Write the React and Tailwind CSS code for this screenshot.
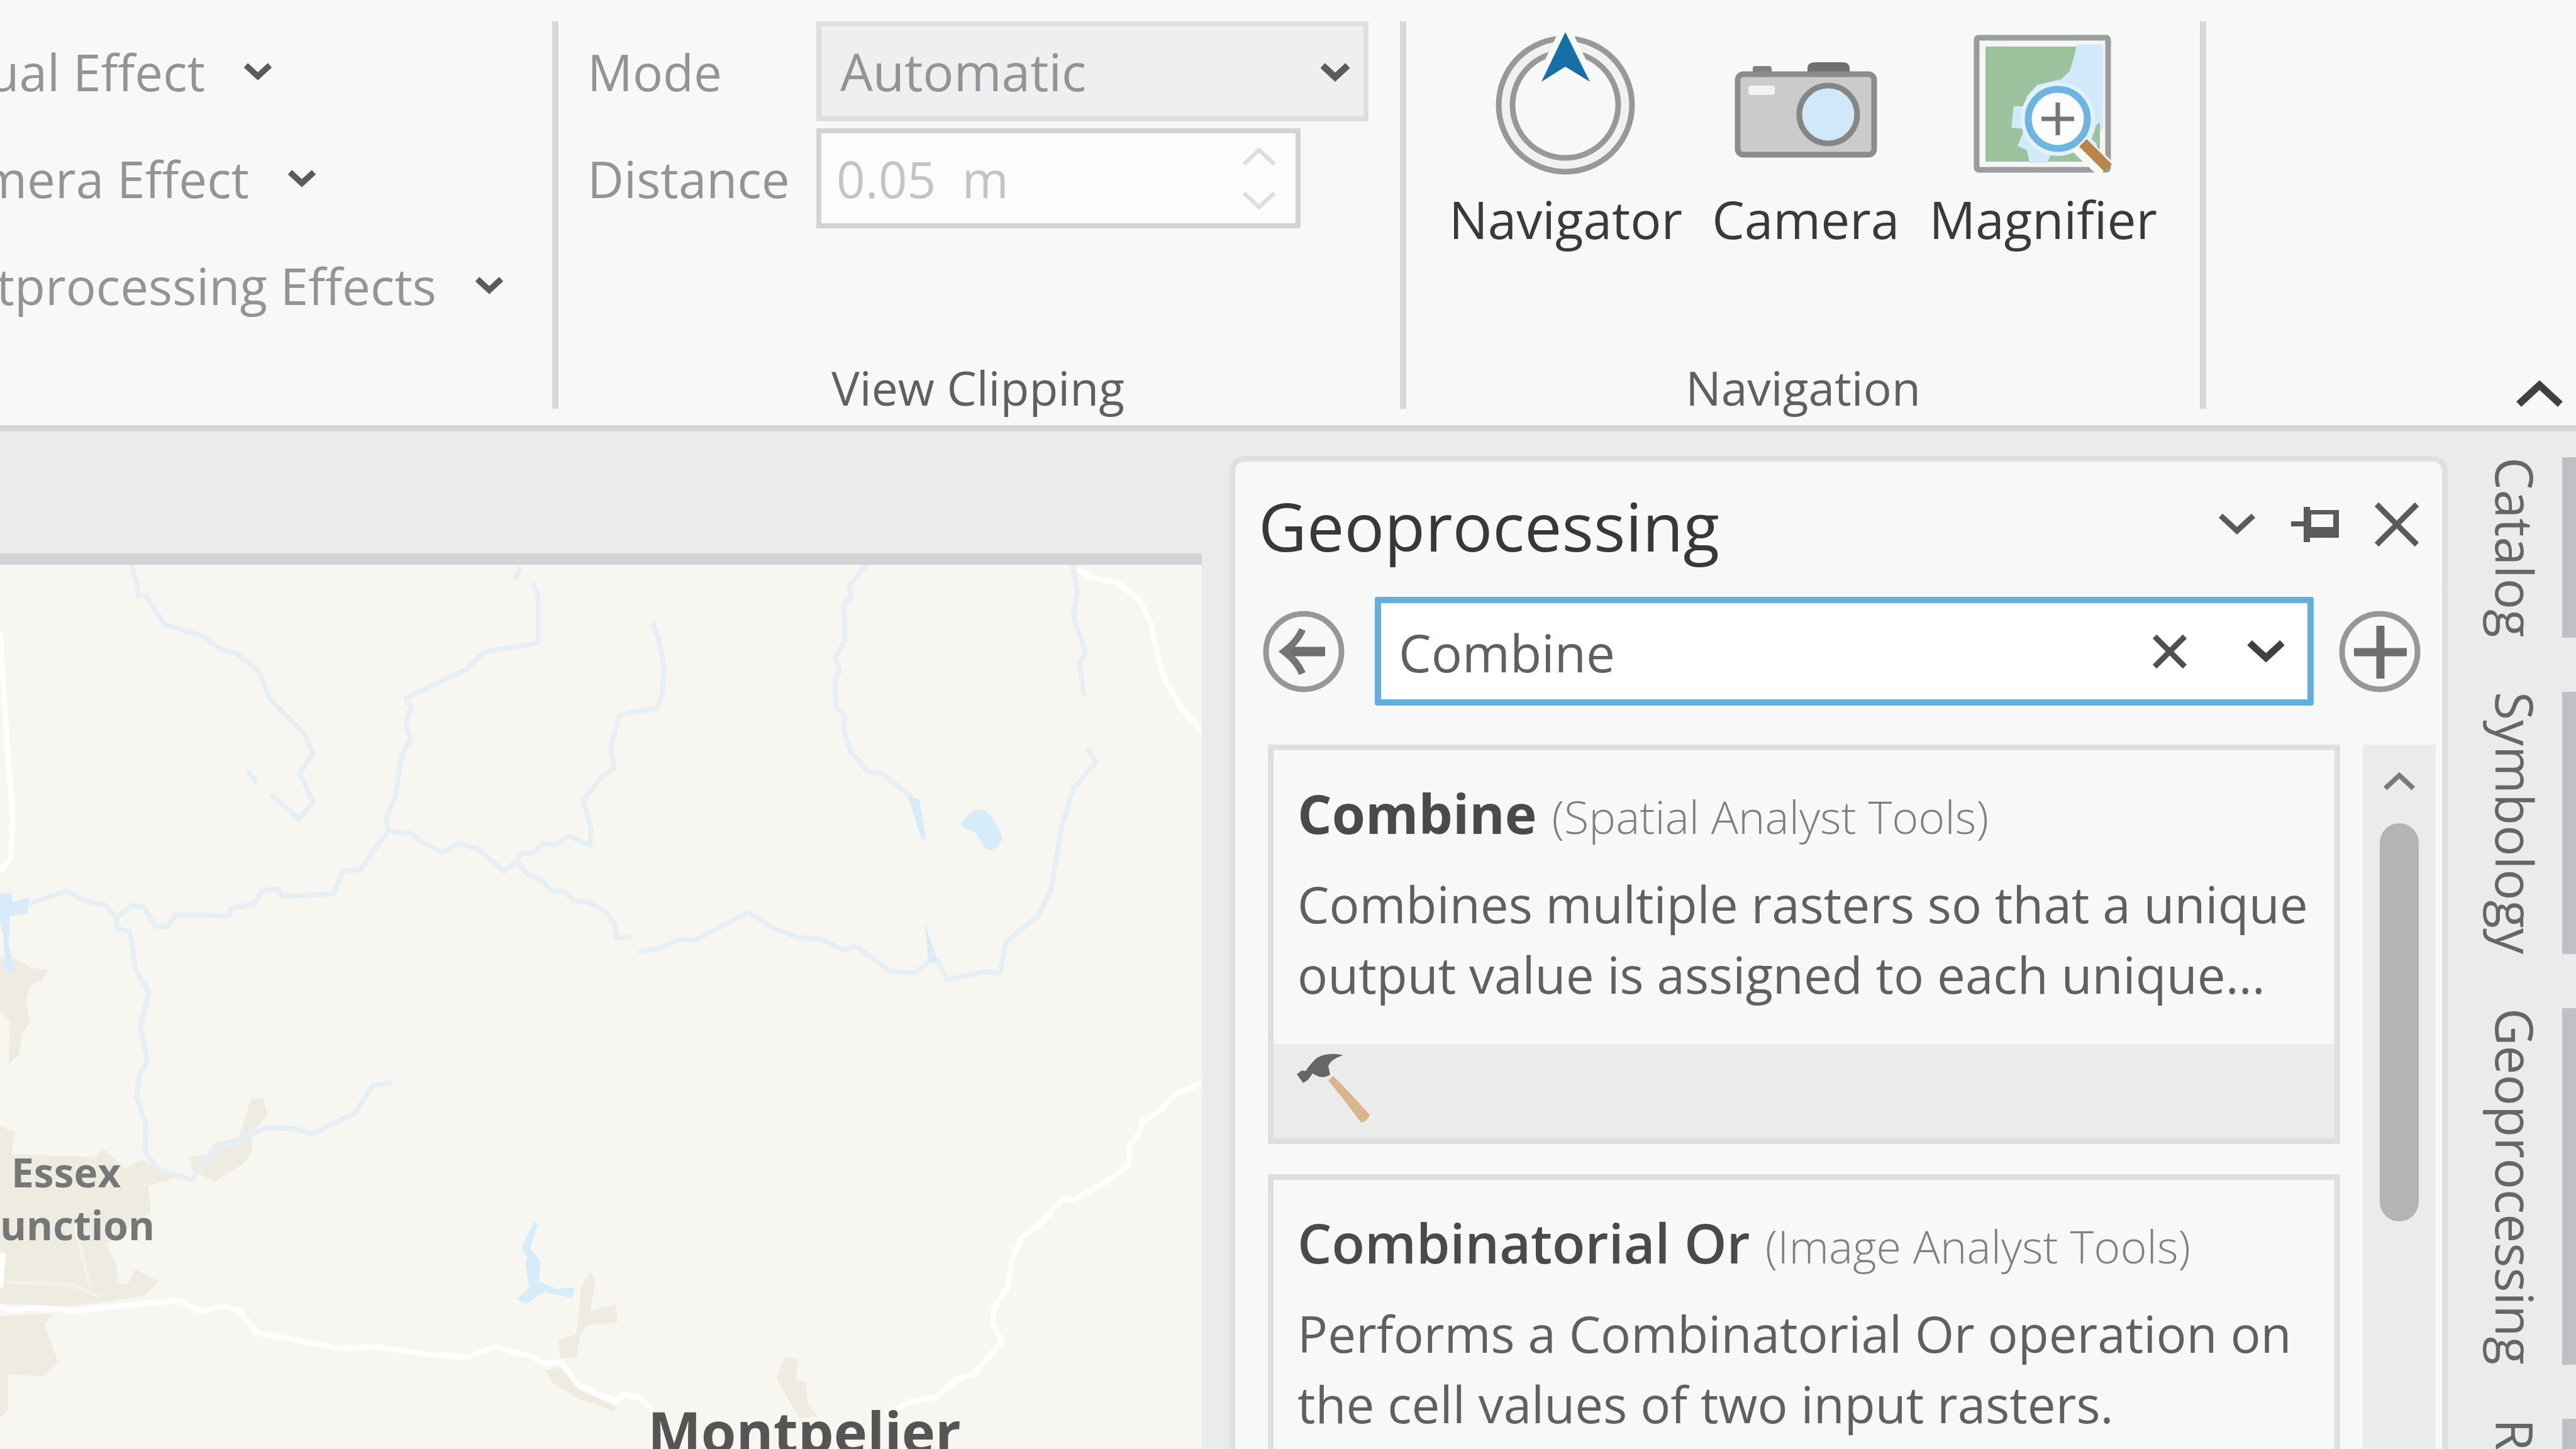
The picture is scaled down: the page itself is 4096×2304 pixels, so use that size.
import React from "react";

function Chevron({ up = false, className = "", stroke = 10 }) {
  return (
    <svg viewBox="0 0 60 36" fill="none" stroke="currentColor" strokeWidth={stroke} className={className} aria-hidden="true">
      <path d={up ? "M4 32 L30 8 L56 32" : "M4 4 L30 28 L56 4"} />
    </svg>
  );
}

function Cross({ className = "", stroke = 10 }) {
  return (
    <svg viewBox="0 0 72 72" fill="none" stroke="currentColor" strokeWidth={stroke} className={className} aria-hidden="true">
      <path d="M4 4 L68 68 M68 4 L4 68" />
    </svg>
  );
}

function PinIcon() {
  return (
    <svg viewBox="0 0 76 56" className="h-[56px] w-[76px]" aria-hidden="true">
      <g fill="#5a5a5a">
        <rect x="0" y="23" width="24" height="8" />
        <rect x="20" y="0" width="10" height="56" />
        <path d="M26 5 H76 V49 H26 Z M32 12 V32 H67 V12 Z" fillRule="evenodd" />
      </g>
    </svg>
  );
}

function NavigatorIcon() {
  return (
    <svg viewBox="0 0 223 230" className="h-[230px] w-[223px]" aria-hidden="true">
      <circle cx="111" cy="117" r="95" fill="none" stroke="#f1f1f1" strokeWidth="20" />
      <circle cx="111" cy="117" r="106" fill="none" stroke="#989898" strokeWidth="9" />
      <circle cx="111" cy="117" r="84" fill="none" stroke="#989898" strokeWidth="9" />
      <path d="M111 1 L150 80 L111 56 L73 80 Z" fill="#1670a8" stroke="#f7f9f8" strokeWidth="20" paintOrder="stroke" />
    </svg>
  );
}

function CameraIcon() {
  return (
    <svg viewBox="0 -47 227 230" className="h-[230px] w-[227px]" aria-hidden="true">
      <rect x="29" y="8" width="30" height="16" rx="4" fill="#808080" />
      <path d="M116 22 V12 Q116 2 128 2 H172 Q183 2 183 12 V22 Z" fill="#6f6f6f" />
      <rect x="5" y="21" width="217" height="128" rx="9" fill="#cbcbcb" stroke="#8c8c8c" strokeWidth="9" />
      <rect x="22" y="39" width="42" height="15" rx="4" fill="#f2f2f2" />
      <circle cx="149" cy="85" r="46" fill="#d0e8f8" stroke="#868686" strokeWidth="9" />
    </svg>
  );
}

function MagnifierIcon() {
  return (
    <svg viewBox="0 -5 222 230" className="h-[230px] w-[222px]" aria-hidden="true">
      <rect x="5" y="5" width="209" height="210" rx="3" fill="#f4f6f5" stroke="#9b9d9c" strokeWidth="9" />
      <rect x="19" y="19" width="182" height="183" fill="#9bc29c" />
      <path d="M164 16 H206 V148 L196 160 L196 190 L124 190 L118 204 H89 L85 184 L70 177 L81 150 L60 148 L64 114 H81 L85 98 L101 80 L139 71 L153 58 L160 35 Z" fill="#d1e9f8" />
      <path d="M124 190 L118 202 H190 L166 174 Z M196 143 L201 140 V178 L188 166 Z" fill="#9bc29c" />
      <circle cx="134" cy="134" r="59" fill="#e4f1f9" />
      <circle cx="134" cy="134" r="47" fill="#fdfdfd" stroke="#6cb4e2" strokeWidth="11" />
      <path d="M108 134 H160 M134 108 V160" stroke="#757575" strokeWidth="7" />
      <path d="M168 174 L210 214" stroke="#f7f9f8" strokeWidth="32" />
      <path d="M174 172 L214 212" stroke="#ba8548" strokeWidth="17" strokeLinecap="butt" />
    </svg>
  );
}

function HammerIcon() {
  return (
    <svg viewBox="0 0 116 110" className="h-[110px] w-[116px]" aria-hidden="true">
      <path d="M50 43 L58 36 Q90 68 116 98 Q112 108 102 110 Q76 74 50 43 Z" fill="#d9b58a" />
      <path d="M0 33 L8 27 L14 28 Q22 16 32 7 Q50 -3 74 3 Q54 9 50 20 L53 34 Q42 40 33 36 L25 32 Q22 36 18 42 L10 47 Z" fill="#666666" />
    </svg>
  );
}

function BackIcon() {
  return (
    <svg viewBox="0 0 130 130" fill="none" className="h-[130px] w-[130px]" aria-hidden="true">
      <circle cx="65" cy="65" r="60" stroke="#979797" strokeWidth="9" />
      <path d="M38 65 H99" stroke="#6e6e6e" strokeWidth="15" />
      <path d="M63 30 Q54 50 34 65 Q54 80 63 100" stroke="#757575" strokeWidth="11" />
    </svg>
  );
}

function AddIcon() {
  return (
    <svg viewBox="0 0 130 130" fill="none" className="h-[130px] w-[130px]" aria-hidden="true">
      <circle cx="65" cy="65" r="60" stroke="#979797" strokeWidth="9" />
      <path d="M24 66 H108 M66 24 V108" stroke="#6e6e6e" strokeWidth="13" />
    </svg>
  );
}

function Separator() {
  return <div className="my-[34px] mb-[26px] w-[10px] shrink-0 bg-[#d6d8d7]" />;
}

function EffectButton({ label, widthClass }) {
  return (
    <button type="button" className="flex h-[159px] items-center gap-[62px]">
      <span className={"flex justify-end whitespace-nowrap leading-[112px] " + widthClass}>{label}</span>
      <Chevron className="h-[30px] w-[44px] shrink-0 text-[#5c5c5c]" stroke={13} />
    </button>
  );
}

function NavButton({ icon, label }) {
  return (
    <button type="button" className="flex flex-col items-center gap-[20px] text-[#3a3a3a]">
      {icon}
      <span className="text-[82px] leading-[96px]">{label}</span>
    </button>
  );
}

function Ribbon() {
  return (
    <header className="flex shrink-0 border-b-[10px] border-[#d3d6d8] bg-[#f7f9f8] text-[80px] text-[#929496]">
      <div className="flex h-[676px] w-[878px] shrink-0 flex-col items-start gap-[11px] pt-[34px]">
        <EffectButton label="ual Effect" widthClass="w-[326px]" />
        <EffectButton label="mera Effect" widthClass="w-[396px]" />
        <EffectButton label="tprocessing Effects" widthClass="w-[694px]" />
      </div>
      <Separator />
      <section aria-label="View Clipping" className="flex flex-col justify-between pt-[34px] pr-[50px] pb-[26px] pl-[46px]">
        <div className="grid grid-cols-[364px_878px] items-center gap-y-[11px]">
          <label htmlFor="mode">Mode</label>
          <div className="relative">
            <select id="mode" disabled className="h-[159px] w-full appearance-none border-8 border-[#dcdee0] bg-[#eeeff1] pl-[30px] text-[82px] text-[#929496] opacity-100">
              <option>Automatic</option>
            </select>
            <Chevron className="pointer-events-none absolute top-[66px] right-[30px] h-[30px] w-[46px] text-[#5c5c5c]" stroke={14} />
          </div>
          <label htmlFor="distance">Distance</label>
          <div className="flex h-[159px] w-[770px] items-center border-8 border-[#d2d4d3] bg-[#fcfcfc] pr-[30px]">
            <input id="distance" disabled defaultValue="0.05  m" className="h-full min-w-0 flex-1 bg-transparent pl-[24px] text-[#c2c4c6]" />
            <div className="flex flex-col gap-[38px]">
              <button type="button" disabled aria-label="Increase"><Chevron up className="h-[34px] w-[56px] text-[#dcdfde]" stroke={7} /></button>
              <button type="button" disabled aria-label="Decrease"><Chevron className="h-[34px] w-[56px] text-[#dcdfde]" stroke={7} /></button>
            </div>
          </div>
        </div>
        <h2 className="text-center text-[75px] leading-[68px] text-[#606060]">View Clipping</h2>
      </section>
      <Separator />
      <section aria-label="Navigation" className="flex flex-col justify-between px-[68px] pt-[50px] pb-[26px]">
        <div className="flex gap-[47px]">
          <NavButton icon={<NavigatorIcon />} label="Navigator" />
          <NavButton icon={<CameraIcon />} label="Camera" />
          <NavButton icon={<MagnifierIcon />} label="Magnifier" />
        </div>
        <h2 className="text-center text-[75px] leading-[68px] text-[#606060]">Navigation</h2>
      </section>
      <Separator />
      <div className="flex flex-1 items-end justify-end pr-[20px] pb-[28px]">
        <button type="button" aria-label="Collapse ribbon"><Chevron up className="h-[46px] w-[76px] text-[#404040]" stroke={9} /></button>
      </div>
    </header>
  );
}

const rivers = [
  "M335 45 L350 75 L352 100 L372 98 L420 148 L520 168 L555 188 L605 198 L660 228 L688 275 L775 335 L797 370 L765 403 L798 455 L762 483 L690 440",
  "M630 400 L655 420",
  "M1328 48 L1314 70",
  "M1360 75 L1372 100 L1372 180 L1235 195 L1190 225 L1035 275 L1048 292 L1035 320 L1047 345 L1025 372 L1008 445 L985 480 L992 503",
  "M70 630 L170 607 L215 623 L265 630 L298 652 L335 632 L365 634 L398 668 L425 668 L450 648 L585 650 L590 636 L650 630 L668 606 L708 603 L722 616 L850 612 L875 573 L920 570 L950 540 L990 503 L1050 508 L1080 525 L1130 540 L1170 525 L1220 535 L1285 573 L1318 555 L1345 578 L1385 590 L1405 607 L1440 608 L1465 625 L1500 626 L1540 640 L1568 665 L1572 688 L1610 685",
  "M1318 555 L1330 542 L1360 542 L1385 525 L1420 527 L1450 512 L1505 528 L1508 505 L1488 450 L1535 410 L1566 395 L1558 360 L1578 305 L1625 297 L1678 292 L1690 262 L1693 215 L1678 170 L1665 145",
  "M298 652 L298 672 L330 676 L348 745 L380 782 L358 840 L375 900 L355 925 L348 960 L372 1010 L370 1055 L405 1088 L490 1104 L545 1052 L600 1040 L675 1015 L750 1016 L795 1025 L905 990 L950 942 L1000 937",
  "M1628 712 L1680 706 L1735 690 L1772 692 L1910 643 L1970 670 L2035 687 L2095 690 L2150 708 L2185 703 L2270 745 L2335 748 L2372 725 L2392 727 L2415 760 L2505 746 L2550 748 L2565 695 L2650 648 L2680 605 L2710 490 L2738 430 L2795 385 L2772 360",
  "M2210 45 L2165 82 L2170 100 L2152 115 L2155 175 L2130 205 L2142 228 L2130 240 L2132 290 L2155 305 L2152 330 L2170 368 L2215 402 L2250 405 L2325 445",
  "M2735 45 L2748 90 L2738 135 L2768 195 L2752 215 L2765 270",
];

const roads = [
  "M0 160 L16 330 L32 480 L28 548 L0 575",
  "M0 1322 L35 1330 L80 1324 L190 1330 L360 1318 L455 1312 L515 1332 L570 1321 L610 1330 L655 1368 L860 1394 L970 1393 L1110 1407 L1195 1409 L1265 1392 L1350 1408 L1390 1420 L1430 1418 L1475 1458 L1568 1486 L1590 1475 L1630 1478 L1665 1503",
  "M2750 52 L2780 67 L2850 76 L2905 105 L2935 145 L2962 230 L3010 290 L3065 332",
  "M3065 938 L3000 955 L2960 985 L2915 1003 L2905 1025 L2880 1045 L2878 1080 L2820 1108 L2740 1138 L2710 1138 L2650 1182 L2605 1203 L2582 1240 L2570 1290 L2535 1325 L2532 1350 L2555 1383 L2485 1438 L2440 1448 L2390 1478 L2320 1487 L2260 1510",
  "M0 1290 L8 1230",
];

const towns = [
  "M0 1012 L38 1022 L30 1060 L240 1065 L262 1050 L320 1085 L360 1070 L410 1085 L450 1100 L378 1115 L385 1160 L270 1215 L298 1250 L300 1280 L325 1285 L345 1258 L405 1280 L365 1305 L180 1322 L0 1318 Z",
  "M0 1338 L140 1335 L112 1352 L148 1418 L115 1442 L20 1440 L22 1500 L0 1515 Z",
  "M0 720 L45 725 L80 740 L125 742 L105 762 L78 768 L66 795 L78 832 L58 850 L48 890 L22 904 L25 830 L0 815 Z",
  "M485 1065 L530 1060 L545 1042 L610 1030 L640 965 L672 965 L682 992 L640 1025 L645 1050 L625 1075 L545 1108 L512 1095 L492 1092 Z",
  "M1505 1262 L1520 1278 L1505 1330 L1570 1318 L1574 1350 L1500 1355 L1480 1372 L1470 1410 L1430 1412 L1425 1380 L1470 1370 L1482 1290 Z",
  "M1392 1432 L1430 1428 L1475 1465 L1568 1494 L1568 1504 L1470 1480 L1410 1455 Z",
  "M2000 1410 L2035 1412 L2030 1450 L2055 1452 L2060 1490 L2085 1512 L2040 1515 L1980 1448 Z",
];

const lakes = [
  "M2450 495 Q2470 466 2500 466 Q2535 472 2556 515 Q2545 540 2515 535 L2488 507 Z",
  "M2315 442 L2345 450 L2362 518 L2350 518 Z",
  "M2358 660 L2372 690 L2392 728 L2368 730 Z",
  "M0 612 L28 610 L32 626 L75 618 L70 645 L25 650 L22 700 L40 748 L14 745 L8 680 L0 660 Z",
  "M1362 1175 L1372 1180 L1352 1222 L1378 1245 L1375 1280 L1420 1292 L1465 1290 L1460 1308 L1388 1298 L1340 1318 L1318 1310 L1350 1290 L1340 1250 L1345 1238 L1330 1222 Z",
];

function MapView() {
  return (
    <main className="relative flex-1 overflow-hidden border-t-[18px] border-[#d2d2d7] bg-[#f7f6f1] font-['Open_Sans','Noto_Sans',sans-serif] font-bold">
      <svg viewBox="0 45 3065 1523" preserveAspectRatio="none" className="block h-full w-full" fill="none" strokeLinejoin="round" role="img" aria-label="Topographic map">
        {towns.map((d) => <path key={d} d={d} fill="#eeece0" />)}
        <path d="M0 1280 L180 1285 L255 1305 M190 1180 L230 1290" stroke="#f3f2ea" strokeWidth="6" vectorEffect="non-scaling-stroke" />
        {rivers.map((d) => <path key={d} d={d} stroke="#e5f0f4" strokeWidth="8" vectorEffect="non-scaling-stroke" />)}
        {lakes.map((d) => <path key={d} d={d} fill="#d6ecf8" />)}
        {roads.map((d) => <path key={d} d={d} stroke="#fefefe" strokeWidth="9" vectorEffect="non-scaling-stroke" />)}
      </svg>
      <div className="absolute top-[924px] left-0 text-[64px] leading-[84px] text-[#777777]">
        <div className="pl-[18px]">Essex</div>
        <div>unction</div>
      </div>
      <div className="absolute top-[1333px] left-[1030px] text-[90px] leading-[88px] text-[#555555]">Montpelier</div>
    </main>
  );
}

function ToolCard({ name, toolbox, description, weightClass, children }) {
  return (
    <article className="shrink-0 border-[9px] border-[#dedfde]">
      <div className="pt-[50px] pr-[16px] pb-[55px] pl-[38px]">
        <h3 className="flex items-baseline gap-[24px] whitespace-nowrap leading-[100px]">
          <span className={"text-[86px] text-[#4a4a4a] " + weightClass}>{name}</span>
          <span className="text-[72px] font-light text-[#808080]">({toolbox})</span>
        </h3>
        <p className="mt-[33px] text-[80px] leading-[112px] text-[#606060]">{description}</p>
      </div>
      <div className="flex h-[150px] items-center bg-[#ebebeb] px-[37px] pb-[10px]">{children}</div>
    </article>
  );
}

function GeoprocessingPane() {
  return (
    <section aria-label="Geoprocessing" className="mt-[39px] flex flex-1 flex-col rounded-t-[24px] border-x-[9px] border-t-[9px] border-[#dfe0e2] bg-[#f7f9f8]">
      <div className="flex h-[201px] shrink-0 items-center border-b-2 border-[#f4f6f5] pr-[36px] pl-[37px] text-[#5a5a5a]">
        <h1 className="flex-1 pt-[4px] text-[106px] leading-[150px] text-[#383838]">Geoprocessing</h1>
        <div className="flex items-center gap-[56px]">
          <button type="button" aria-label="Pane options"><Chevron className="h-[36px] w-[60px]" stroke={9} /></button>
          <button type="button" aria-label="Auto hide"><PinIcon /></button>
          <button type="button" aria-label="Close"><Cross className="h-[72px] w-[72px]" stroke={9} /></button>
        </div>
      </div>
      <div className="flex shrink-0 items-center pt-[14px] pr-[34px] pl-[44px]">
        <button type="button" aria-label="Back"><BackIcon /></button>
        <div className="mr-[40px] ml-[48px] flex h-[173px] flex-1 items-center rounded-[4px] border-[10px] border-[#60afdc] bg-white pr-[36px]">
          <input aria-label="Find tools" defaultValue="Combine" className="h-full min-w-0 flex-1 bg-transparent pt-[2px] pl-[28px] text-[82px] text-[#606060] outline-none" />
          <button type="button" aria-label="Clear"><Cross className="h-[54px] w-[54px] text-[#505050]" stroke={12} /></button>
          <button type="button" aria-label="Search history" className="ml-[96px]"><Chevron className="h-[36px] w-[60px] text-[#404040]" stroke={11} /></button>
        </div>
        <button type="button" aria-label="Add"><AddIcon /></button>
      </div>
      <div className="mt-[62px] flex min-h-0 flex-1 pr-[10px] pl-[52px]">
        <div className="flex min-w-0 flex-1 flex-col gap-[48px] overflow-hidden">
          <ToolCard name="Combine" toolbox="Spatial Analyst Tools" weightClass="font-bold" description="Combines multiple rasters so that a unique output value is assigned to each unique...">
            <HammerIcon />
          </ToolCard>
          <ToolCard name="Combinatorial Or" toolbox="Image Analyst Tools" weightClass="font-semibold" description="Performs a Combinatorial Or operation on the cell values of two input rasters.">
            <HammerIcon />
          </ToolCard>
        </div>
        <div className="ml-[36px] flex w-[116px] shrink-0 flex-col items-center bg-[#ebebeb] pt-[42px]">
          <button type="button" aria-label="Scroll up"><Chevron up className="h-[31px] w-[52px] text-[#7a7a7a]" stroke={9} /></button>
          <div className="mt-[52px] h-[633px] w-[62px] rounded-full bg-[#b4b4b4]" />
        </div>
      </div>
    </section>
  );
}

function PaneTabs() {
  const tabs = ["Catalog", "Symbology", "Geoprocessing", "R"];
  return (
    <nav aria-label="Panes" className="flex w-[204px] shrink-0 flex-col items-end gap-[86px] overflow-hidden pt-[41px]">
      {tabs.map((t) => (
        <button key={t} type="button" className="min-h-[200px] shrink-0 border-r-[22px] border-[#bfc0c5] pr-[24px] text-left text-[82px] leading-[100px] whitespace-nowrap text-[#666666] [writing-mode:vertical-rl]">
          {t}
        </button>
      ))}
    </nav>
  );
}

export default function App() {
  return (
    <div className="flex h-screen flex-col overflow-hidden bg-[#ebebeb] font-['Open_Sans','Noto_Sans',sans-serif]">
      <Ribbon />
      <div className="flex min-h-0 flex-1">
        <div className="flex flex-[1911] flex-col pt-[194px]">
          <MapView />
        </div>
        <div className="ml-[44px] flex flex-[1937] flex-col">
          <GeoprocessingPane />
        </div>
        <PaneTabs />
      </div>
    </div>
  );
}
